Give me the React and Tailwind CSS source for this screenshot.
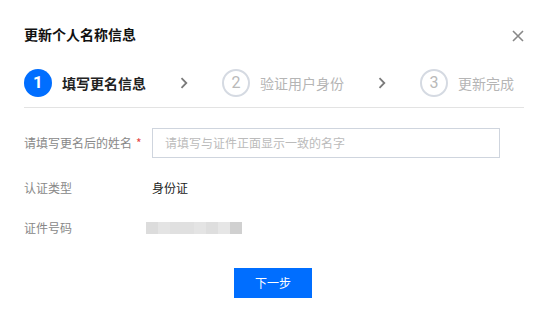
import React from "react";

const font = { fontFamily: '"Noto Sans CJK SC", "Noto Sans", sans-serif' };

function Chevron() {
  return (
    <svg width="8" height="12" viewBox="0 0 8 12" className="mx-[34px] shrink-0">
      <path d="M1.5 1.2 L6.3 6 L1.5 10.8" fill="none" stroke="#7a7a7a" strokeWidth="1.8" />
    </svg>
  );
}

function Step({ n, label, active }) {
  return (
    <div className="flex items-center">
      <div
        className={
          active
            ? "w-7 h-7 rounded-full bg-[#006eff] flex items-center justify-center text-white text-[17px] font-bold font-['Roboto']"
            : "w-7 h-7 rounded-full border-2 border-[#d5dae2] flex items-center justify-center text-[#b9b9b9] text-[16px] font-['Roboto']"
        }
      >
        {n}
      </div>
      <span
        className={
          active
            ? "ml-[10px] text-[14px] leading-5 font-bold text-[#222]"
            : "ml-[10px] text-[14px] leading-5 text-[#b5b5b5]"
        }
      >
        {label}
      </span>
    </div>
  );
}

export default function App() {
  return (
    <div style={font} className="w-[546px] h-[319px] bg-white pl-6 pr-[22px] pt-6">
      <div className="flex items-center justify-between h-5">
        <div className="text-[14px] leading-5 font-bold text-[#111]">更新个人名称信息</div>
        <svg width="12" height="12" viewBox="0 0 12 12" className="mt-[4px]">
          <path d="M1 1 L11 11 M11 1 L1 11" stroke="#888" strokeWidth="1.6" />
        </svg>
      </div>
      <div className="mt-[25px] flex items-center pb-[10px] border-b border-[#e3e3e3]">
        <Step n="1" label="填写更名信息" active />
        <Chevron />
        <Step n="2" label="验证用户身份" />
        <Chevron />
        <Step n="3" label="更新完成" />
      </div>
      <div className="mt-5 flex flex-col text-[12px]">
        <div className="flex items-center h-[30px]">
          <div className="w-[128px] text-[#888]">
            请填写更名后的姓名<span className="text-[#e54545] ml-1">*</span>
          </div>
          <div className="w-[348px] h-[30px] border border-[#cfd5de] flex items-center pl-3 text-[#bbb]">
            请填写与证件正面显示一致的名字
          </div>
        </div>
        <div className="flex items-center h-[30px] mt-[15px]">
          <div className="w-[128px] text-[#888]">认证类型</div>
          <div className="text-[#222]">身份证</div>
        </div>
        <div className="flex items-center h-[30px] mt-[10px]">
          <div className="w-[122px] text-[#888]">证件号码</div>
          <div className="flex h-3">
            <div className="w-3 bg-[#dcdcdc]" />
            <div className="w-3 bg-[#e4e4e4]" />
            <div className="w-6 bg-[#e0e0e0]" />
            <div className="w-3 bg-[#e4e4e4]" />
            <div className="w-3 bg-[#dedede]" />
            <div className="w-3 bg-[#e6e6e6]" />
            <div className="w-3 bg-[#d0d0d0]" />
          </div>
        </div>
      </div>
      <div className="flex justify-center mt-[25px] pr-[2px]">
        <button className="w-[78px] h-[30px] bg-[#006eff] text-white text-[12px]">下一步</button>
      </div>
    </div>
  );
}
